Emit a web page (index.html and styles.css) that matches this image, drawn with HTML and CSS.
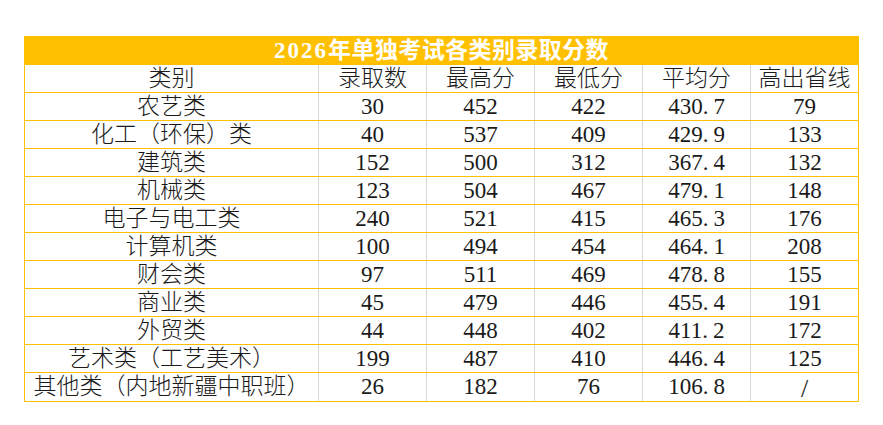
FILE: index.html
```html
<!DOCTYPE html>
<html lang="zh-CN">
<head>
<meta charset="utf-8">
<title>2026年单独考试各类别录取分数</title>
<link rel="stylesheet" href="styles.css">
</head>
<body>
<table class="scores">
  <colgroup>
    <col class="c-name">
    <col class="c-num">
    <col class="c-num">
    <col class="c-num">
    <col class="c-num">
    <col class="c-num">
  </colgroup>
  <thead>
    <tr class="title-row"><th colspan="6"><span class="year">2026</span>年单独考试各类别录取分数</th></tr>
    <tr class="head-row"><th>类别</th><th>录取数</th><th>最高分</th><th>最低分</th><th>平均分</th><th>高出省线</th></tr>
  </thead>
  <tbody>
    <tr><td>农艺类</td><td>30</td><td>452</td><td>422</td><td>430<span class="dot">.</span>7</td><td>79</td></tr>
    <tr><td>化工（环保）类</td><td>40</td><td>537</td><td>409</td><td>429<span class="dot">.</span>9</td><td>133</td></tr>
    <tr><td>建筑类</td><td>152</td><td>500</td><td>312</td><td>367<span class="dot">.</span>4</td><td>132</td></tr>
    <tr><td>机械类</td><td>123</td><td>504</td><td>467</td><td>479<span class="dot">.</span>1</td><td>148</td></tr>
    <tr><td>电子与电工类</td><td>240</td><td>521</td><td>415</td><td>465<span class="dot">.</span>3</td><td>176</td></tr>
    <tr><td>计算机类</td><td>100</td><td>494</td><td>454</td><td>464<span class="dot">.</span>1</td><td>208</td></tr>
    <tr><td>财会类</td><td>97</td><td>511</td><td>469</td><td>478<span class="dot">.</span>8</td><td>155</td></tr>
    <tr><td>商业类</td><td>45</td><td>479</td><td>446</td><td>455<span class="dot">.</span>4</td><td>191</td></tr>
    <tr><td>外贸类</td><td>44</td><td>448</td><td>402</td><td>411<span class="dot">.</span>2</td><td>172</td></tr>
    <tr><td>艺术类（工艺美术）</td><td>199</td><td>487</td><td>410</td><td>446<span class="dot">.</span>4</td><td>125</td></tr>
    <tr><td>其他类（内地新疆中职班）</td><td>26</td><td>182</td><td>76</td><td>106<span class="dot">.</span>8</td><td><span class="slash">/</span></td></tr>
  </tbody>
</table>
</body>
</html>
```
FILE: styles.css
```css
html, body {
  margin: 0;
  padding: 0;
  background: #ffffff;
}

body {
  padding: 36px 0 0 24px;
  font-family: "Liberation Serif", "Noto Sans CJK SC", serif;
  color: #1a1a1a;
}

.scores {
  border-collapse: collapse;
  table-layout: fixed;
  width: 835px;
  border: 1px solid #ffc000;
}

.c-name { width: 294px; }
.c-num { width: 108px; }

.scores th,
.scores td {
  height: 27px;
  padding: 0;
  text-align: center;
  vertical-align: middle;
  font-size: 23px;
  font-weight: 300;
  line-height: 27px;
  white-space: nowrap;
  border-top: 1px solid #ffc000;
  border-bottom: 1px solid #ffc000;
  border-left: 1px solid #d6d6d6;
  border-right: 1px solid #d6d6d6;
}

.scores th:first-child,
.scores td:first-child {
  border-left: 1px solid #ffc000;
}

.scores th:last-child,
.scores td:last-child {
  border-right: 1px solid #ffc000;
}

.title-row th {
  background: #ffc000;
  color: #ffffff;
  font-weight: bold;
  font-size: 23px;
  letter-spacing: 0.4px;
  border-left: 1px solid #ffc000;
  border-right: 1px solid #ffc000;
}

.year {
  letter-spacing: 2px;
}

.dot {
  padding-right: 5px;
}

.slash {
  display: inline-block;
  font-size: 26px;
  line-height: 24px;
  vertical-align: middle;
}
```
